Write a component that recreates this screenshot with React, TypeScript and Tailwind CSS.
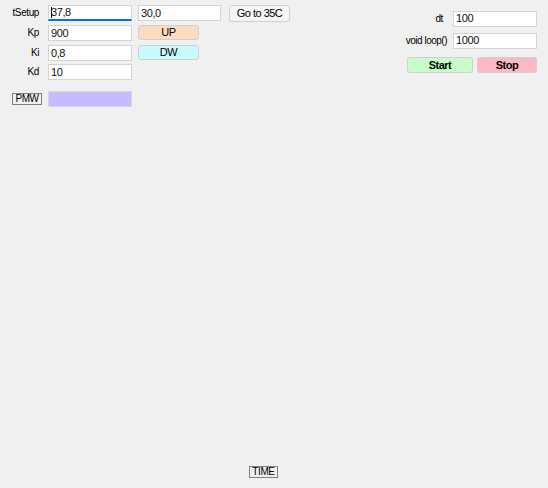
import React from 'react';

const font = { fontFamily: '"Liberation Sans", Arial, sans-serif' };

const TextBox = ({ value, w = 'w-[84px]', focused = false }: { value: string; w?: string; focused?: boolean }) => (
  <div
    className={`${w} h-[16px] bg-white border border-[#d4d4d4] flex items-center pl-[2px] text-[11px] tracking-[-0.4px] text-[#111] leading-none ${
      focused ? 'border-b-[#0078d7] border-b-2' : ''
    }`}
  >
    {focused && <span className="w-px h-[11px] bg-black -mr-px" />}
    {value}
  </div>
);

const Btn = ({ label, cls, bold = false }: { label: string; cls: string; bold?: boolean }) => (
  <div
    className={`${cls} border border-[#d0d0d0] rounded-[3px] flex items-center justify-center text-[11px] tracking-[-0.5px] text-black leading-none ${
      bold ? 'font-bold' : ''
    }`}
  >
    {label}
  </div>
);

const Label = ({ text }: { text: string }) => (
  <div className="w-[39px] text-right text-[10px] tracking-[-0.4px] text-black leading-none shrink-0">{text}</div>
);

export default function App() {
  return (
    <div className="w-[548px] h-[488px] bg-[#f0f0f0] flex flex-col overflow-hidden" style={font}>
      <div className="flex justify-between">
        {/* left block */}
        <div className="flex flex-col pt-[5px]">
          <div className="flex items-center h-[16px]">
            <Label text="tSetup" />
            <div className="ml-[9px]">
              <TextBox value="37,8" focused />
            </div>
            <div className="ml-[6px]">
              <TextBox value="30,0" w="w-[83px]" />
            </div>
            <div className="ml-[8px]">
              <Btn label="Go to 35C" cls="w-[61px] h-[17px] bg-[#f4f4f4]" />
            </div>
          </div>
          <div className="flex items-center h-[16px] mt-[4px]">
            <Label text="Kp" />
            <div className="ml-[9px]">
              <TextBox value="900" />
            </div>
            <div className="ml-[6px] -mt-[2px]">
              <Btn label="UP" cls="w-[61px] h-[15px] bg-[#fcdcc0]" />
            </div>
          </div>
          <div className="flex items-center h-[16px] mt-[4px]">
            <Label text="Ki" />
            <div className="ml-[9px]">
              <TextBox value="0,8" />
            </div>
            <div className="ml-[6px] -mt-[2px]">
              <Btn label="DW" cls="w-[61px] h-[15px] bg-[#c8fafc]" />
            </div>
          </div>
          <div className="flex items-center h-[16px] mt-[3px]">
            <Label text="Kd" />
            <div className="ml-[9px]">
              <TextBox value="10" />
            </div>
          </div>
          <div className="flex items-center h-[16px] mt-[11px]">
            <div className="ml-[12px] w-[30px] h-[12px] border border-[#808080] flex items-center justify-center text-[10px] tracking-[-0.4px] leading-none text-black">
              PMW
            </div>
            <div className="ml-[6px] w-[84px] h-[16px] bg-[#c4bcfc] border border-[#d8d8d8]" />
          </div>
        </div>

        {/* right block */}
        <div className="flex flex-col pt-[11px] pr-[11px] items-end">
          <div className="flex items-center h-[15px]">
            <div className="text-[10px] tracking-[-0.4px] leading-none text-black">dt</div>
            <div className="ml-[10px]">
              <TextBox value="100" />
            </div>
          </div>
          <div className="flex items-center h-[15px] mt-[7px]">
            <div className="text-[10px] tracking-[-0.5px] leading-none text-black">void loop()</div>
            <div className="ml-[6px]">
              <TextBox value="1000" />
            </div>
          </div>
          <div className="flex items-center mt-[9px] gap-[4px]">
            <Btn label="Start" cls="w-[66px] h-[16px] bg-[#c8fcc8]" bold />
            <Btn label="Stop" cls="w-[60px] h-[16px] bg-[#fcb8c4]" bold />
          </div>
        </div>
      </div>

      <div className="flex-1" />
      <div className="pb-[10px] pl-[249px]">
        <div className="w-[29px] h-[12px] border border-[#808080] flex items-center justify-center text-[10px] tracking-[-0.4px] leading-none text-black">
          TIME
        </div>
      </div>
    </div>
  );
}
